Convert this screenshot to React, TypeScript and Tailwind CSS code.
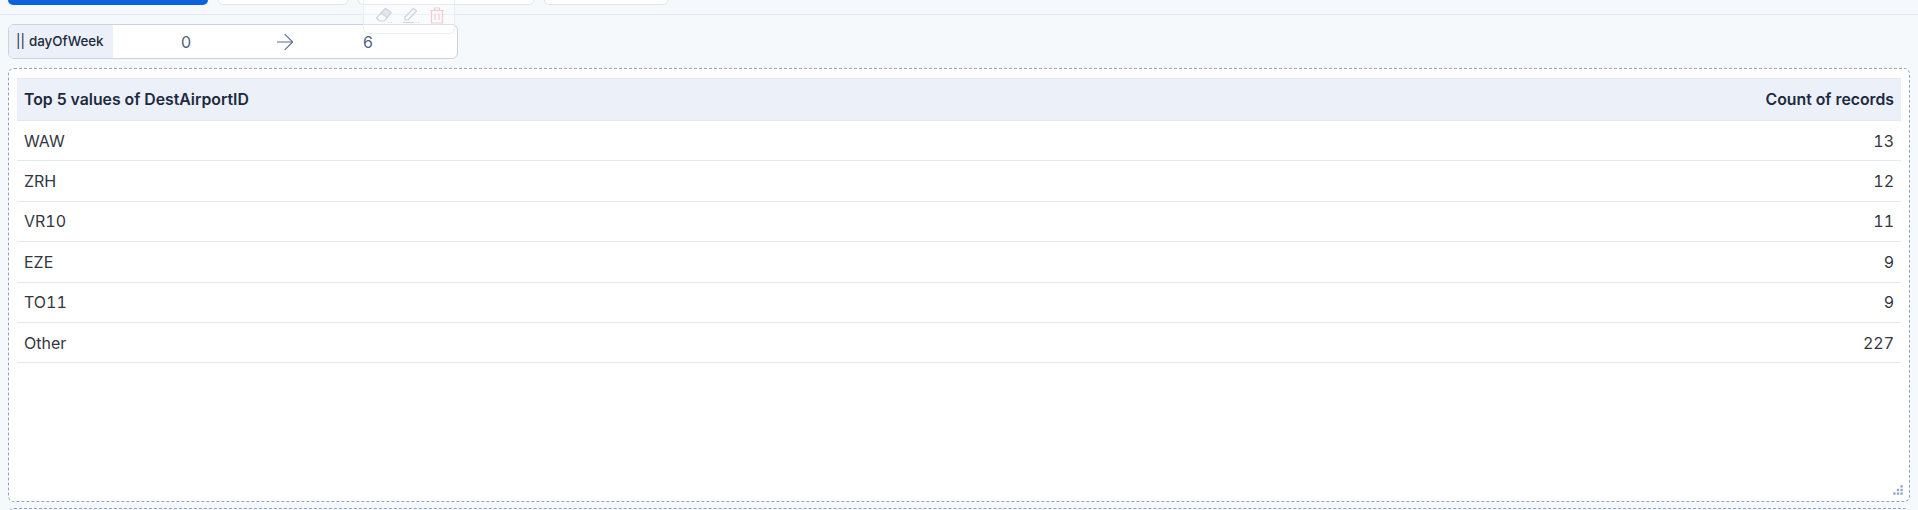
import React from 'react';
import { ArrowRight } from 'lucide-react';

const rows = [
  { label: 'WAW', count: 13 },
  { label: 'ZRH', count: 12 },
  { label: 'VR10', count: 11 },
  { label: 'EZE', count: 9 },
  { label: 'TO11', count: 9 },
  { label: 'Other', count: 227 },
];

function TopButtons() {
  return (
    <div className="flex h-[15px] items-start gap-[10px] border-b border-[#e3e9f2] pl-2">
      <div className="h-[5px] w-[200px] rounded-b-md bg-[#0b64dd]" />
      <div className="h-[5px] w-[130px] rounded-b-md border border-t-0 border-[#dfe5ef] bg-white" />
      <div className="h-[5px] w-[176px] rounded-b-md border border-t-0 border-[#dfe5ef] bg-white" />
      <div className="h-[5px] w-[124px] rounded-b-md border border-t-0 border-[#dfe5ef] bg-white" />
    </div>
  );
}

function EraserIcon() {
  return (
    <svg width="18" height="17" viewBox="0 0 18 17" fill="none" stroke="#cdd4de" strokeWidth="1.2">
      <path d="M10.5 1.5 16 5.5 9.5 14H5L1.5 11.2Z" strokeLinejoin="round" />
      <path d="M10.5 1.5 16 5.5 12 10.5 6 6Z" fill="#e4e8ee" />
      <path d="M13 15.5h1M15.5 15.5h1" />
    </svg>
  );
}

function PencilIcon() {
  return (
    <svg width="18" height="17" viewBox="0 0 18 17" fill="none" stroke="#cdd4de" strokeWidth="1.2">
      <path d="M11.5 1.5 14.5 4 6 13H3V10Z" strokeLinejoin="round" />
      <path d="M1 15.5h11M13.5 15.5h1M16 15.5h1" />
    </svg>
  );
}

function TrashIcon() {
  return (
    <svg width="16" height="17" viewBox="0 0 16 17" fill="none" stroke="#f0ccd1" strokeWidth="1.2">
      <path d="M1 3.5h14M5.5 3.5V1h5v2.5" />
      <path d="M2.5 3.5V16h11V3.5" />
      <path d="M6 6.5v6.5M10 6.5v6.5" />
    </svg>
  );
}

function RangeControl() {
  return (
    <div className="flex h-[35px] w-[450px] overflow-hidden rounded-md border border-[#cad3e2] bg-white">
      <div className="flex w-[104px] items-center gap-[5px] bg-[#ecf1f9] pl-[7px] text-[13.4px] font-medium text-[#1d2a3e]">
        <span className="font-normal text-[#1d2a3e]">||</span>
        <span className="-ml-[1px]">dayOfWeek</span>
      </div>
      <div className="flex w-[124px] items-center justify-center text-base text-[#516381]">
        <span className="ml-[22px]">0</span>
      </div>
      <div className="flex w-[76px] items-center justify-center text-[#5f6f88]">
        <ArrowRight size={26} strokeWidth={1} className="ml-[20px]" />
      </div>
      <div className="flex w-[90px] items-center justify-center text-base text-[#516381]">
        <span className="ml-[20px]">6</span>
      </div>
    </div>
  );
}

export default function App() {
  return (
    <div className="relative h-[510px] w-[1918px] overflow-hidden bg-[#f6f9fc] font-['Inter',sans-serif] text-base text-[#1d2a3e]">
      <TopButtons />

      {/* hover actions, faded over the toolbar */}
      <div className="absolute left-[363px] top-[-10px] z-10 flex h-[44px] w-[92px] items-end gap-[9px] rounded-md border border-[#e9eef5] bg-white/30 pb-[9px] pl-[11px]">
        <EraserIcon />
        <PencilIcon />
        <TrashIcon />
      </div>

      <div className="px-2 pt-[9px]">
        <RangeControl />

        <div className="relative mt-[9px] flex h-[434px] w-[1902px] flex-col rounded-md border border-dashed border-[#8fa2bf] bg-white px-2 pt-[9px]">
          <div className="flex h-[43px] items-center justify-between border-y border-[#e3e9f2] bg-[#ecf1f9] px-[7px] text-[15.8px] font-semibold">
            <span>Top 5 values of DestAirportID</span>
            <span>Count of records</span>
          </div>
          {rows.map((row) => (
            <div
              key={row.label}
              className="flex h-[40.4px] items-center justify-between border-b border-[#e3e9f2] px-[7px] text-[#343741] tabular-nums"
            >
              <span>{row.label}</span>
              <span>{row.count}</span>
            </div>
          ))}

          <svg className="absolute bottom-[5px] right-[5px]" width="12" height="12" viewBox="0 0 10 10" fill="#98a8c3">
            <rect x="7" y="1" width="2" height="2" />
            <rect x="4" y="4" width="2" height="2" />
            <rect x="7" y="4" width="2" height="2" />
            <rect x="1" y="7" width="2" height="2" />
            <rect x="4" y="7" width="2" height="2" />
            <rect x="7" y="7" width="2" height="2" />
          </svg>
        </div>

        <div className="mt-[6px] h-[10px] w-[1902px] rounded-t-md border-t border-dashed border-[#8fa2bf]" />
      </div>
    </div>
  );
}
